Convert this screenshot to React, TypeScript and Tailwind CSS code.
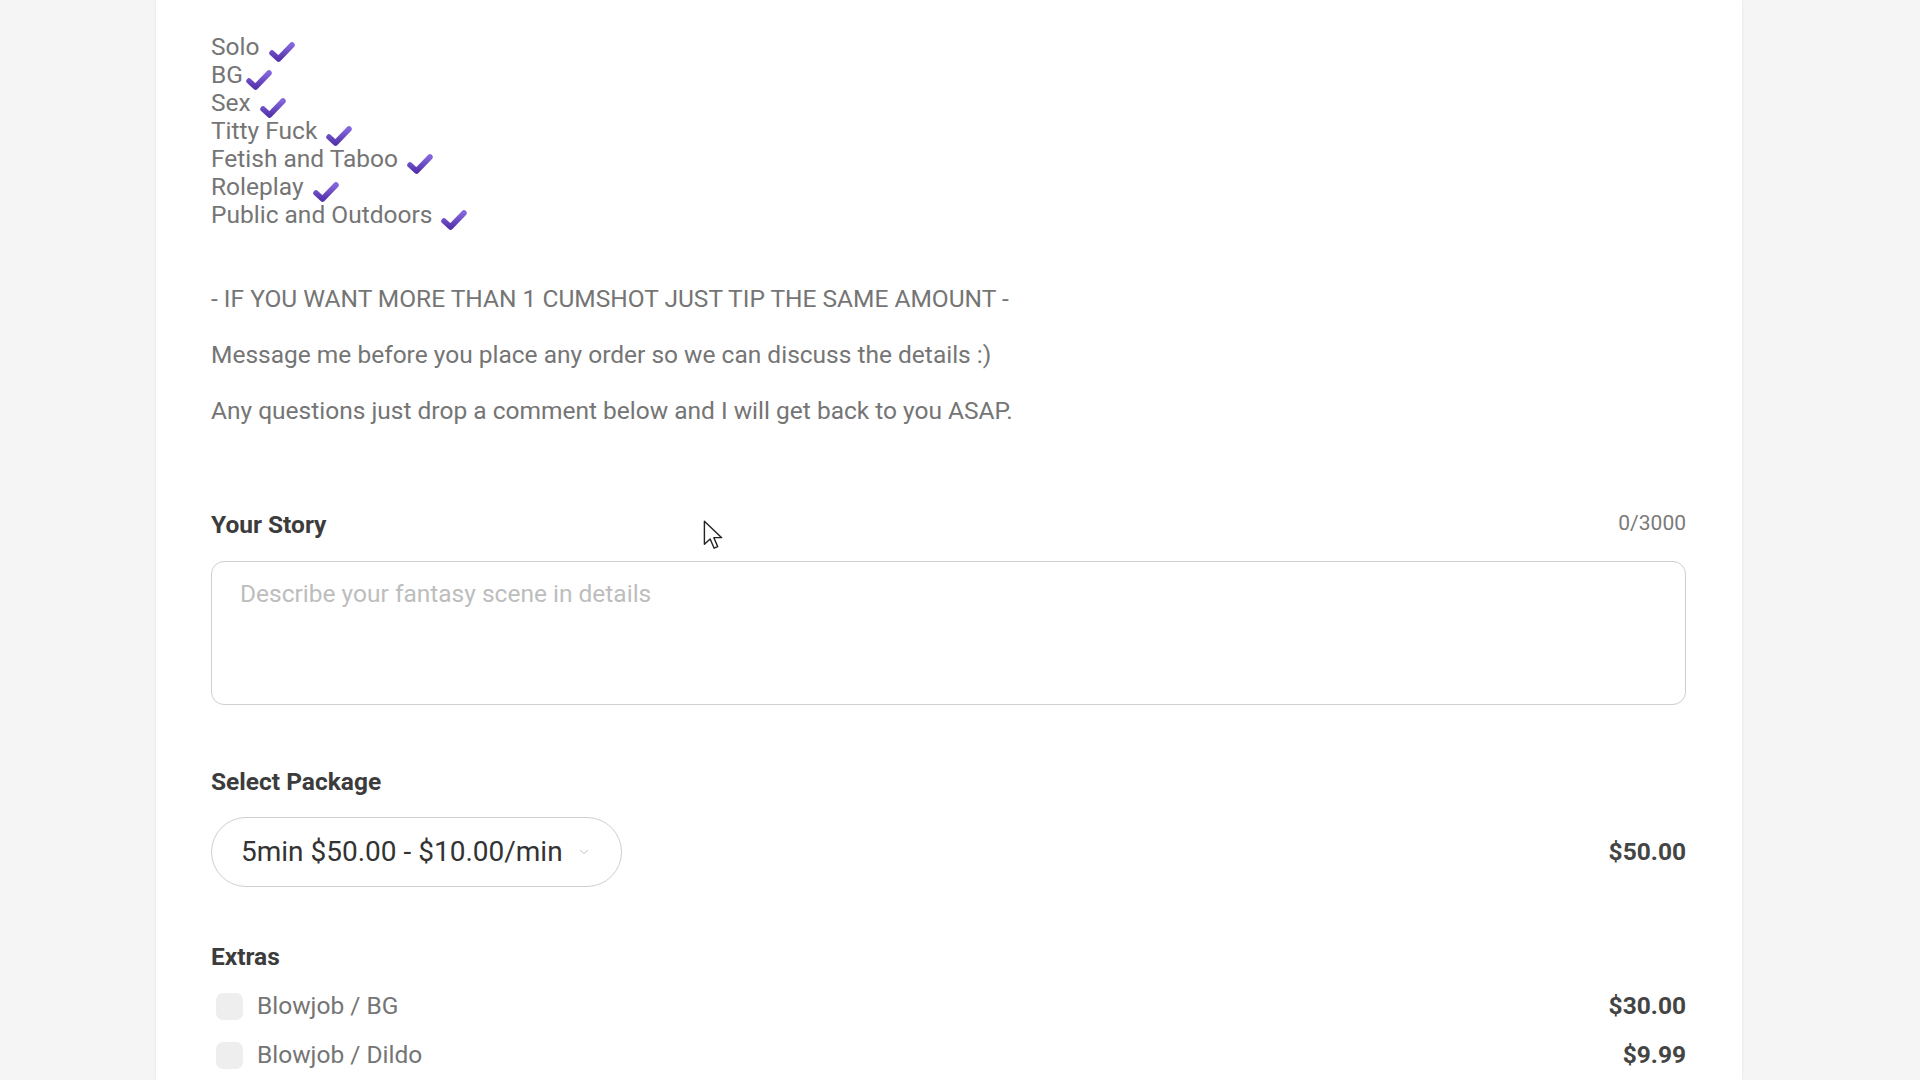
import { ChevronDown } from "lucide-react";

const tags = [
  { label: "Solo", gap: true },
  { label: "BG", gap: false },
  { label: "Sex", gap: true },
  { label: "Titty Fuck", gap: true },
  { label: "Fetish and Taboo", gap: true },
  { label: "Roleplay", gap: true },
  { label: "Public and Outdoors", gap: true },
];

const extras = [
  { label: "Blowjob / BG", price: "$30.00" },
  { label: "Blowjob / Dildo", price: "$9.99" },
];

function Check() {
  return (
    <svg width="28" height="22" viewBox="0 0 28 22" className="ml-[2px] inline-block translate-y-[3px]">
      <defs>
        <linearGradient id="chk" x1="0" y1="0" x2="0" y2="1">
          <stop offset="0%" stopColor="#8466dc" />
          <stop offset="100%" stopColor="#5634ad" />
        </linearGradient>
      </defs>
      <path
        d="M4 12 L10.5 18 L24 4"
        fill="none"
        stroke="url(#chk)"
        strokeWidth="5.5"
        strokeLinecap="round"
        strokeLinejoin="round"
      />
    </svg>
  );
}

function Pointer() {
  return (
    <svg
      width="22"
      height="32"
      viewBox="0 0 17 25"
      className="pointer-events-none absolute left-[703px] top-[520px]"
    >
      <path
        d="M1 1 L1 19 L5.5 14.8 L8.6 22 L11.4 20.8 L8.4 13.8 L14.5 13.8 Z"
        fill="#fff"
        stroke="#222"
        strokeWidth="1.1"
        strokeLinejoin="round"
      />
    </svg>
  );
}

export default function App() {
  return (
    <div className="relative min-h-screen overflow-hidden bg-[#f5f5f5] font-['Roboto',sans-serif]">
      <div className="ml-[156px] min-h-[1080px] w-[1586px] bg-white px-[55px] pt-[33px] shadow-[0_0_3px_rgba(0,0,0,0.08)]">
        <ul className="text-[24.5px] leading-[28px] text-[#757575]">
          {tags.map((tag) => (
            <li key={tag.label}>
              {tag.label}
              {tag.gap ? " " : null}
              <Check />
            </li>
          ))}
        </ul>

        <div className="mt-[56px] space-y-[28px] text-[24.5px] leading-[28px] text-[#757575]">
          <p>- IF YOU WANT MORE THAN 1 CUMSHOT JUST TIP THE SAME AMOUNT -</p>
          <p>Message me before you place any order so we can discuss the details :)</p>
          <p>Any questions just drop a comment below and I will get back to you ASAP.</p>
        </div>

        <div className="mt-[86px] flex w-[1475px] items-center justify-between">
          <span className="text-[24.5px] font-bold leading-[28px] text-[#3c3c3c]">Your Story</span>
          <span className="-translate-y-[2px] text-[21px] leading-[28px] text-[#7a7a7a]">0/3000</span>
        </div>
        <textarea
          placeholder="Describe your fantasy scene in details"
          className="mt-[22px] block h-[144px] w-[1475px] resize-none rounded-[13px] border border-[#cfcfcf] bg-white px-[28px] py-[18px] text-[24.5px] leading-[28px] text-[#333] outline-none placeholder:text-[#bdbdbd]"
        />

        <div className="mt-[63px] text-[24.5px] font-bold leading-[28px] text-[#3c3c3c]">Select Package</div>
        <div className="mt-[21px] flex w-[1475px] items-center justify-between">
          <button className="flex h-[70px] w-[411px] items-center justify-between rounded-full border border-[#cfcfcf] pl-[29px] pr-[30px] text-[28px] text-[#333]">
            <span>5min $50.00 - $10.00/min</span>
            <ChevronDown className="h-[14px] w-[14px] text-[#b8b8b8]" strokeWidth={1.5} />
          </button>
          <span className="text-[24.5px] font-bold text-[#444]">$50.00</span>
        </div>

        <div className="mt-[56px] text-[24.5px] font-bold leading-[28px] text-[#3c3c3c]">Extras</div>
        <div className="mt-[22px] flex w-[1475px] flex-col gap-[22px]">
          {extras.map((item) => (
            <label key={item.label} className="flex h-[27px] items-center justify-between">
              <span className="flex items-center gap-[14px] pl-[5px]">
                <span className="h-[27px] w-[27px] rounded-[7px] bg-[#eeeeee]" />
                <span className="text-[24.5px] text-[#757575]">{item.label}</span>
              </span>
              <span className="text-[24.5px] font-bold text-[#444]">{item.price}</span>
            </label>
          ))}
        </div>
      </div>
      <Pointer />
    </div>
  );
}
